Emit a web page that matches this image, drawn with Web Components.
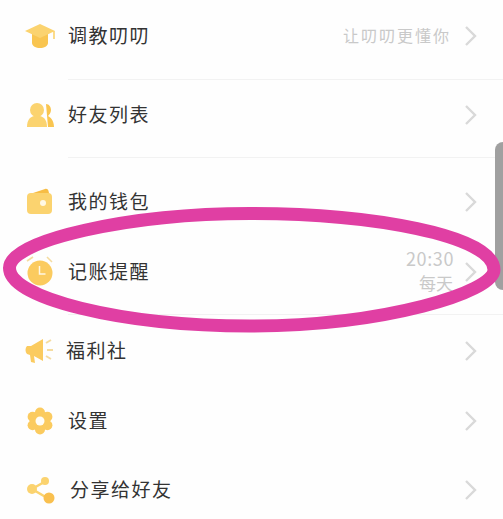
<!DOCTYPE html>
<html lang="zh">
<head>
<meta charset="utf-8">
<title>菜单</title>
<style>
  html, body { margin: 0; height: 100%; background: #fefefe; overflow: hidden; }
  body { font-family: "Noto Sans CJK SC", "Liberation Sans", sans-serif; }
  .time { font-size: 18px; letter-spacing: .6px; margin-right: -3px; }
  .days { font-size: 17px; letter-spacing: 0; margin-right: -2px; }
</style>
</head>
<body>
<menu-page>
  <menu-row style="margin-top:14px">
    <svg slot="icon" viewBox="0 0 32 32">
      <path d="M8 14h16v9c0 3-4 5-8 5s-8-2-8-5z" fill="#f9c550"/>
      <path d="M16 4 1 11l15 7 15-7z" fill="#fbd36f"/>
      <path d="M30 11v8" stroke="#fbd36f" stroke-width="1.6" fill="none"/>
    </svg>
    调教叨叨
    <span slot="hint">让叨叨更懂你</span>
  </menu-row>
  <menu-divider style="margin-top:21px"></menu-divider>

  <menu-row style="margin-top:13px">
    <svg slot="icon" viewBox="0 0 32 32">
      <path d="M22 5c3 0 5 3 5 6 0 3-2 5-3 6 2 1 6 4 6 11h-6z" fill="#f9c550"/>
      <circle cx="13" cy="11" r="7" fill="#fbd36f"/>
      <path d="M3 28c0-7 3-10 7-11h6c4 1 7 4 7 11z" fill="#fbd36f"/>
    </svg>
    好友列表
  </menu-row>
  <menu-divider style="margin-top:20px"></menu-divider>

  <menu-row style="margin-top:22px">
    <svg slot="icon" viewBox="0 0 32 32">
      <path d="M6 8 21 3c2-.5 3 .5 3.500 2l1 4z" fill="#f7bd45"/>
      <rect x="3" y="7" width="25" height="21" rx="4" fill="#fbd36f"/>
      <circle cx="19" cy="17" r="3" fill="#fff8e4"/>
    </svg>
    我的钱包
  </menu-row>

  <menu-row style="margin-top:26px">
    <svg slot="icon" viewBox="0 0 32 32">
      <path d="M3 5 9 1M23 1l5 5" stroke="#f5dca0" stroke-width="1.6" fill="none"/>
      <circle cx="16" cy="17" r="12.500" fill="#fbcb5f"/>
      <path d="M15.500 10v8h6" stroke="#fff8e4" stroke-width="1.500" fill="none"/>
    </svg>
    记账提醒
    <span slot="hint"><span class="time">20:30</span><br><span class="days">每天</span></span>
  </menu-row>
  <menu-divider style="margin-top:20px"></menu-divider>

  <menu-row style="margin-top:14px" class="narrow">
    <svg slot="icon" viewBox="0 0 32 32">
      <path d="M19 4 7 11H3c-2 2-2 6 0 8l3 1 1 7 4 1-1-7 9 5z" fill="#fbcb5f"/>
      <path d="M22 8l5-3M23 15h6M22 21l5 3" stroke="#f5dca0" stroke-width="2" fill="none"/>
    </svg>
    福利社
  </menu-row>

  <menu-row style="margin-top:26px">
    <svg slot="icon" viewBox="0 0 32 32">
      <g fill="#fbcb5f">
        <circle cx="16" cy="16" r="10"/>
        <circle cx="16" cy="7.500" r="5"/>
        <circle cx="16" cy="24.500" r="5"/>
        <circle cx="8.600" cy="11.700" r="5"/>
        <circle cx="23.400" cy="11.700" r="5"/>
        <circle cx="8.600" cy="20.300" r="5"/>
        <circle cx="23.400" cy="20.300" r="5"/>
      </g>
      <circle cx="16" cy="16" r="4.500" fill="#fffdf6"/>
    </svg>
    设置
  </menu-row>

  <menu-row style="margin-top:25px" class="wide">
    <svg slot="icon" viewBox="0 0 32 32">
      <path d="M22 7 8 15l17 10" stroke="#fbd36f" stroke-width="2.500" fill="none"/>
      <circle cx="21" cy="7" r="4" fill="#fbd36f"/>
      <circle cx="8" cy="15" r="5" fill="#fbd36f"/>
      <circle cx="25" cy="24" r="5.500" fill="#f9c04f"/>
    </svg>
    分享给好友
  </menu-row>

  <scroll-handle></scroll-handle>
  <marker-ellipse></marker-ellipse>
</menu-page>

<script>
class MenuPage extends HTMLElement {
  connectedCallback() {
    this.attachShadow({ mode: 'open' });
    this.shadowRoot.innerHTML = `
      <style>
        :host {
          display: flex;
          flex-direction: column;
          position: relative;
          width: 503px;
          height: 519px;
          overflow: hidden;
          background: #fefefe;
        }
      </style>
      <slot></slot>
    `;
  }
}

class MenuRow extends HTMLElement {
  connectedCallback() {
    this.attachShadow({ mode: 'open' });
    const shift = this.classList.contains('narrow') ? -2 : this.classList.contains('wide') ? 2 : 0;
    this.shadowRoot.innerHTML = `
      <style>
        :host {
          display: flex;
          align-items: center;
          flex: none;
          height: 44px;
          padding: 0 26px 0 24px;
          color: #333;
          font-size: 19px;
          letter-spacing: 1.500px;
        }
        .icon { display: flex; flex: none; width: 32px; height: 32px; }
        ::slotted(svg) { width: 32px; height: 32px; display: block; }
        .label { margin-left: ${12 + shift}px; padding-bottom: 4px; white-space: nowrap; }
        .hint {
          margin-left: auto;
          margin-right: 13px;
          padding-bottom: 2px;
          color: #c9c9c9;
          font-size: 16px;
          line-height: 23px;
          letter-spacing: 2px;
          text-align: right;
        }
        .chev { flex: none; width: 13px; height: 22px; }
      </style>
      <span class="icon"><slot name="icon"></slot></span>
      <span class="label"><slot></slot></span>
      <span class="hint"><slot name="hint"></slot></span>
      <svg class="chev" viewBox="0 0 13 22">
        <path d="M2 2l9 9-9 9" stroke="#d9d9d9" stroke-width="2.400" fill="none"/>
      </svg>
    `;
  }
}

class MenuDivider extends HTMLElement {
  connectedCallback() {
    this.attachShadow({ mode: 'open' });
    this.shadowRoot.innerHTML = `
      <style>
        :host {
          display: block;
          flex: none;
          height: 1px;
          margin-left: 68px;
          background: #f2f2f2;
        }
      </style>
    `;
  }
}

class ScrollHandle extends HTMLElement {
  connectedCallback() {
    this.attachShadow({ mode: 'open' });
    this.shadowRoot.innerHTML = `
      <style>
        :host {
          position: absolute;
          top: 142px;
          right: 0;
          width: 8px;
          height: 148px;
          background: #a0a0a0;
          border-radius: 8px 0 0 8px;
        }
      </style>
    `;
  }
}

// the hand drawn loop lying over the page, not a true ellipse
class MarkerEllipse extends HTMLElement {
  connectedCallback() {
    this.attachShadow({ mode: 'open' });
    this.shadowRoot.innerHTML = `
      <style>
        :host { position: absolute; top: 200px; left: 0; width: 503px; height: 140px; pointer-events: none; }
        svg { display: block; }
      </style>
      <svg width="503" height="140" viewBox="0 200 503 140">
        <path d="M9.500 268C9.500 240 130 213.500 250 213.500C370 213.500 494 235 494 270C494 292 385 326 250 326C120 326 9.500 298 9.500 268Z"
          fill="none" stroke="#e03fa3" stroke-width="13"/>
      </svg>
    `;
  }
}

customElements.define('menu-page', MenuPage);
customElements.define('menu-row', MenuRow);
customElements.define('menu-divider', MenuDivider);
customElements.define('scroll-handle', ScrollHandle);
customElements.define('marker-ellipse', MarkerEllipse);
</script>
</body>
</html>
